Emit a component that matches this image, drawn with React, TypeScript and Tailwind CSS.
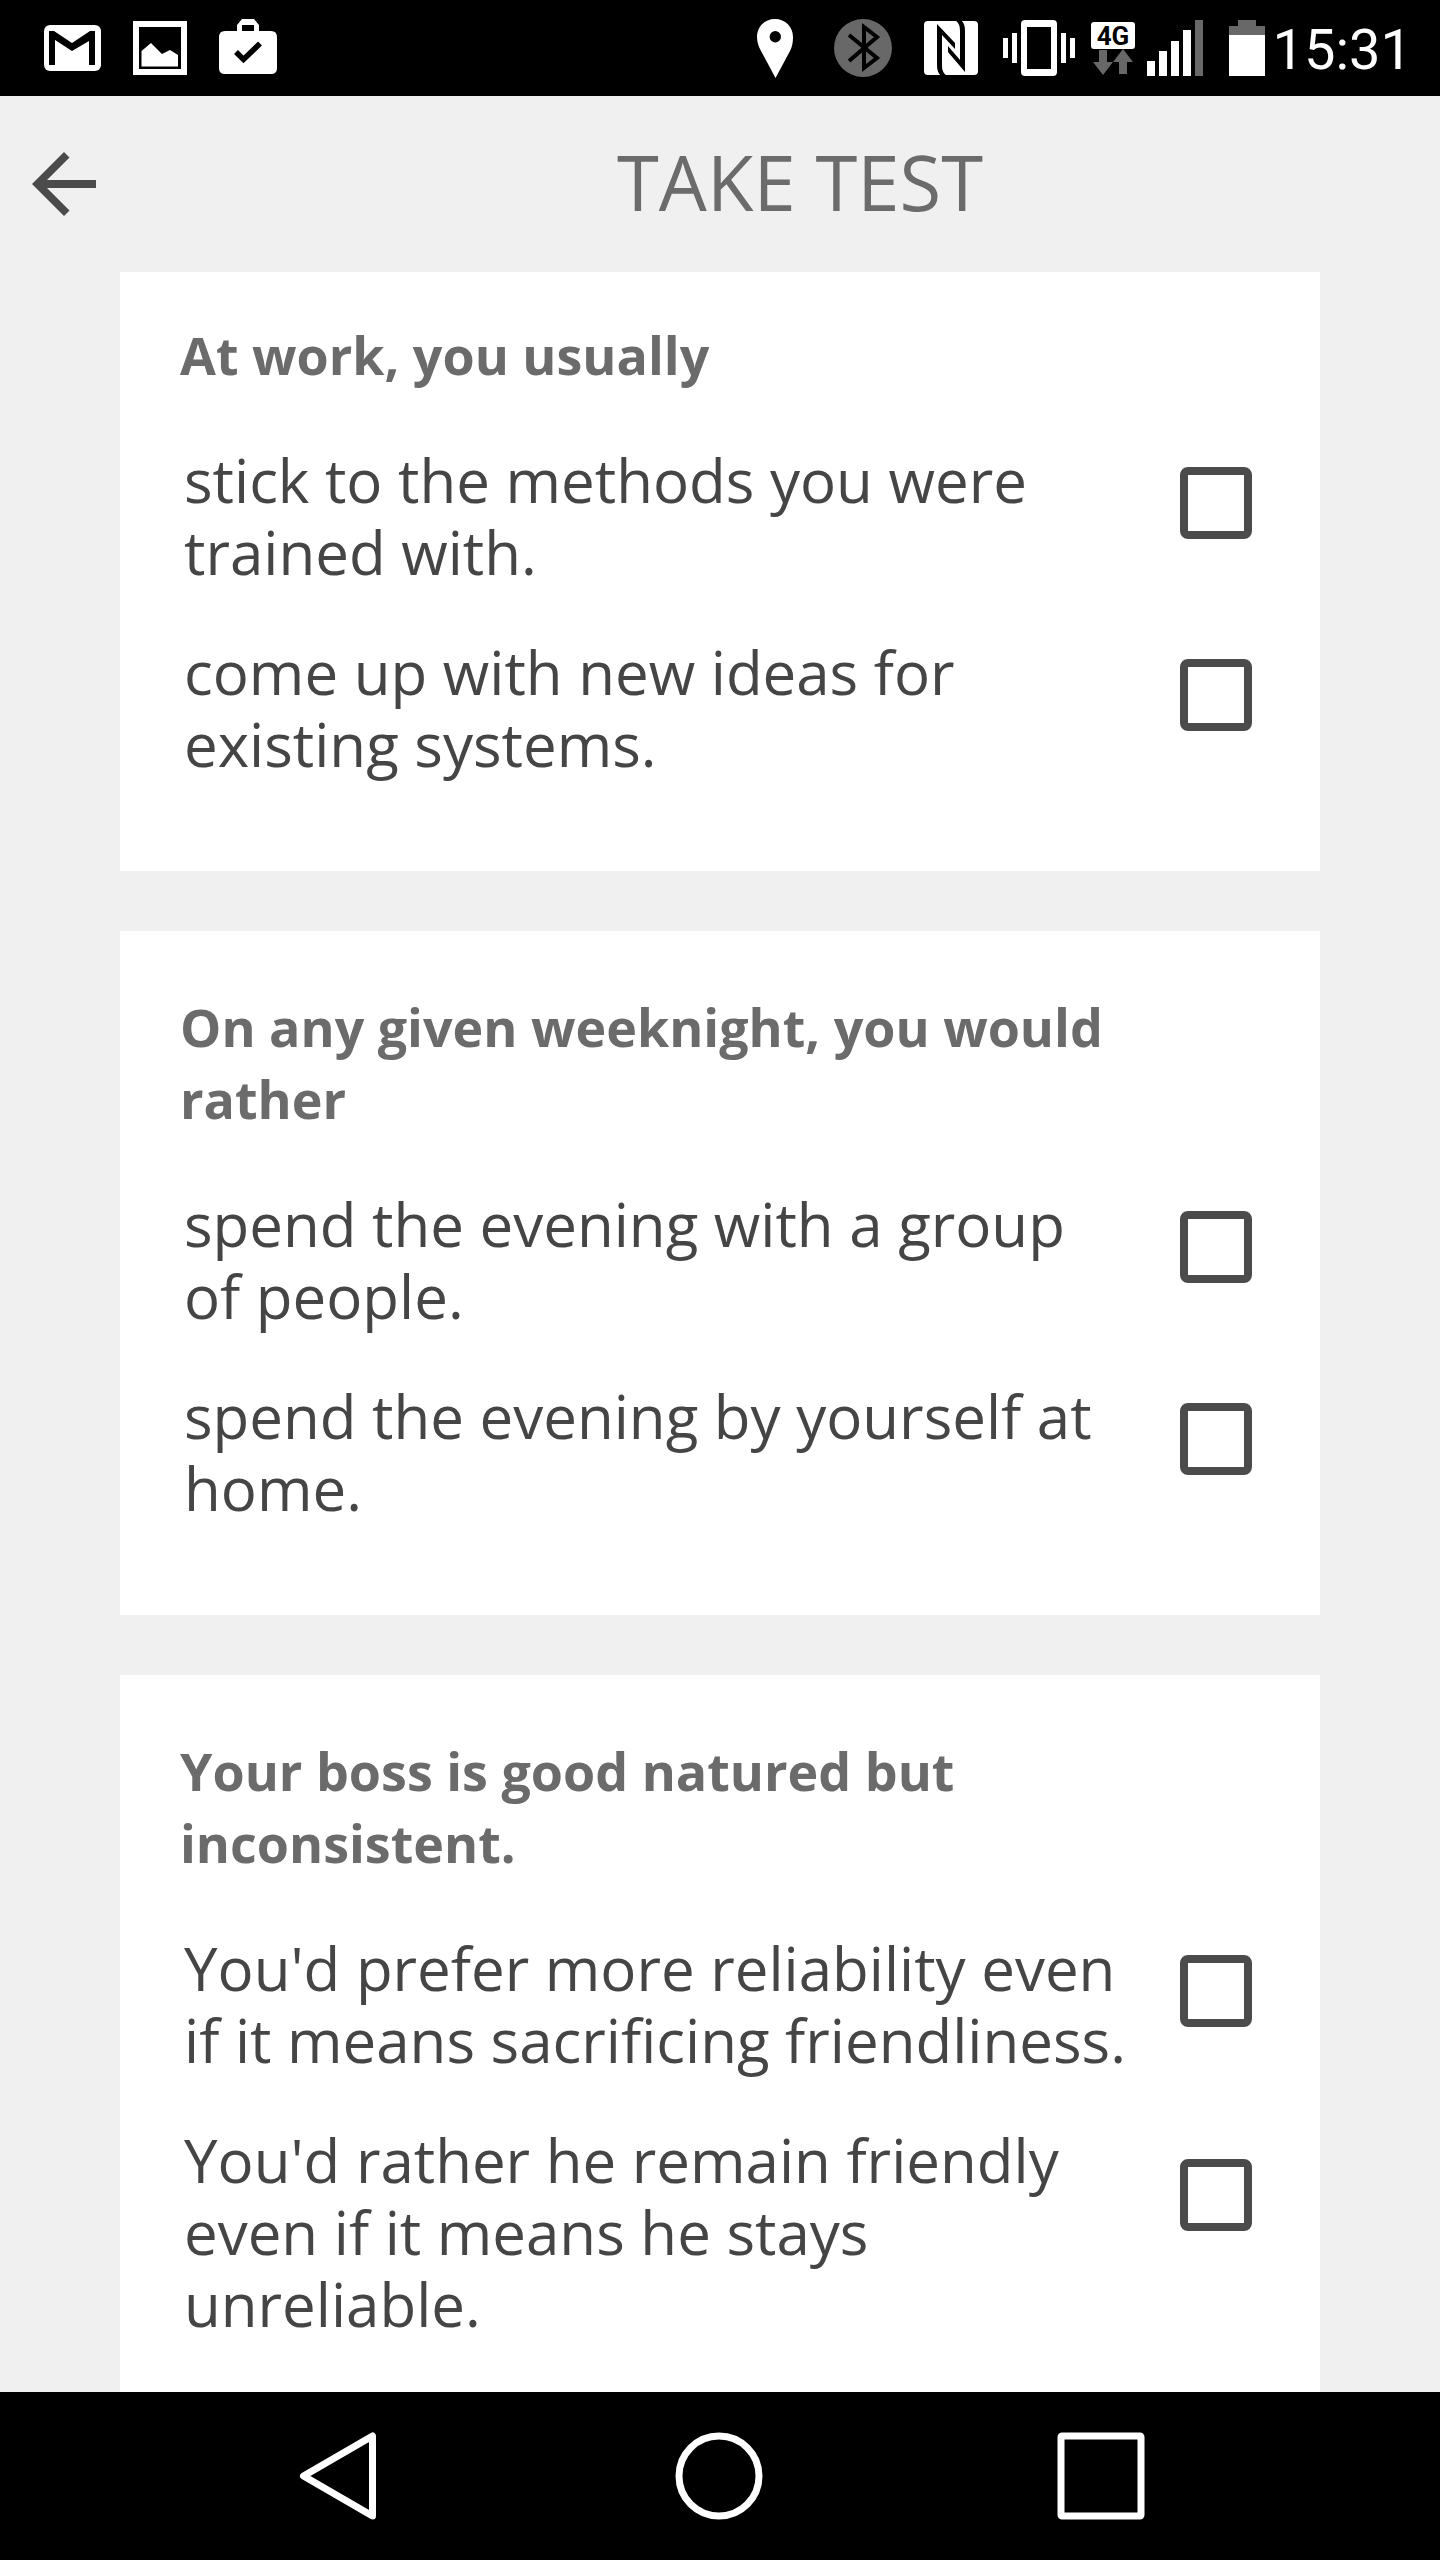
import { useState } from "react";

interface Question {
  id: string;
  title: string;
  options: string[];
}

const questions: Question[] = [
  {
    id: "work",
    title: "At work, you usually",
    options: [
      "stick to the methods you were trained with.",
      "come up with new ideas for existing systems.",
    ],
  },
  {
    id: "weeknight",
    title: "On any given weeknight, you would rather",
    options: [
      "spend the evening with a group of people.",
      "spend the evening by yourself at home.",
    ],
  },
  {
    id: "boss",
    title: "Your boss is good natured but inconsistent.",
    options: [
      "You'd prefer more reliability even if it means sacrificing friendliness.",
      "You'd rather he remain friendly even if it means he stays unreliable.",
    ],
  },
];

const StatusBar = () => (
  <div className="flex h-24 shrink-0 items-center justify-between bg-black pr-7 pl-11 font-['Roboto',sans-serif] text-white">
    <svg width="234" height="96" viewBox="44 0 234 96" fill="#fff" aria-hidden="true">
      <rect x="44" y="25" width="57" height="46" rx="6" />
      <path d="M49 31h5l18 12 18-12h5v34h-6V41L72 51 55 40v25h-6z" fill="#000" />
      <path d="M133 21h54v54h-54zM139 27v42h42V27z" fillRule="evenodd" />
      <path d="M141.500 51l9.500-8 11 11 8-4 8 5v11.500h-36.500z" />
      <path
        d="M225 31h12v-6l5-6h12l5 6v6h12q6 0 6 6v31q0 6-6 6h-46q-6 0-6-6V37q0-6 6-6zM242 25v6h12v-6z"
        fillRule="evenodd"
      />
      <path d="M236 52l7.500 7.500L260 43.500" fill="none" stroke="#000" strokeWidth="5.500" />
    </svg>
    <div className="flex items-center gap-2">
      <svg width="508" height="96" viewBox="757 0 508 96" fill="#fff" aria-hidden="true">
        <path
          d="M775 19c-10.500 0-18 8-18 18 0 6 2 10 4 14l14.500 27L790 51c2-4 3-8 3-14 0-10-7.500-18-18-18zm.3 12a5.700 5.700 0 1 1 0 11.400 5.700 5.700 0 0 1 0-11.400z"
          fillRule="evenodd"
        />
        <circle cx="863" cy="48" r="29" fill="#686868" />
        <path d="M849 35l28 23-13 10V27l13 10-28 24" fill="none" stroke="#000" strokeWidth="4" />
        <rect x="924" y="21" width="54" height="54" rx="4" />
        {/* left and right strokes of the NFC mark */}
        <path d="M937 24l18 19v6l-13-14v30c0 5 1 8 5 11h-6c-3-3-4-6-4-11z" fill="#000" />
        <path d="M965 72l-17-20v-6l12 14V31c0-5-1-8-5-11h6c3 3 4 6 4 11z" fill="#000" />
        <path
          d="M1025 20h28q4 0 4 4v48q0 4-4 4h-28q-4 0-4-4V24q0-4 4-4zM1027 27v42h24V27z"
          fillRule="evenodd"
        />
        <path d="M1003 38h5v20h-5zM1012 33h5v30h-5zM1061 33h5v30h-5zM1070 38h5v20h-5z" />
        <rect x="1091" y="22" width="44" height="27" rx="3" />
        <text x="1113" y="45" textAnchor="middle" fill="#000" className="text-[26px] font-bold">
          4G
        </text>
        <path d="M1099 50h8v12h6l-10 13-10-13h6zM1119 74h8V62h6l-10-13-10 13h6z" fill="#686868" />
        <path d="M1147 61h8v15h-8zM1159 51h8v25h-8zM1171 41h8v35h-8zM1183 30h8v46h-8z" />
        <path d="M1195 20h8v56h-8zM1229 35v-9h9v-6h18v6h9v9z" fill="#686868" />
        <path d="M1229 35h36v41h-36z" />
      </svg>
      <time className="pt-1 text-[56px] leading-[72px]">15:31</time>
    </div>
  </div>
);

const Header = () => (
  <header className="relative z-10 grid h-44 shrink-0 grid-cols-[160px_1fr] items-center bg-[#f0f0f0] pl-8">
    <button type="button" aria-label="Back" className="h-16 w-16">
      <svg width="64" height="64" viewBox="0 0 64 64" fill="#4b4b4b">
        <path d="M64 28H15l22.500-22.500L32 0 0 32l32 32 5.500-5.500L15 36h49z" />
      </svg>
    </button>
    <h1 className="pr-40 pb-1 pl-32 text-center text-[76px] leading-[104px] text-[#6b6b6b]">TAKE TEST</h1>
  </header>
);

const QuestionCard = ({ question }: { question: Question }) => {
  const [checked, setChecked] = useState<string | null>(null);

  return (
    <fieldset className="bg-white px-[60px] pt-[60px] pb-[91px]">
      <legend className="float-left w-full pr-16 pb-[53px] text-[52px] leading-[72px] font-bold text-[#6b6b6b]">
        {question.title}
      </legend>
      <div className="clear-both flex flex-col gap-12">
        {question.options.map((option) => (
          <label key={option} className="flex justify-between gap-12 pr-2 pl-1">
            <span className="flex-1 text-[60px] leading-[72px] text-[#454545]">{option}</span>
            <span className="grid grid-rows-[1fr_5fr]">
              <input
                type="checkbox"
                name={question.id}
                checked={checked === option}
                onChange={() => setChecked(checked === option ? null : option)}
                className="row-start-2 -mt-px h-[72px] w-[72px] appearance-none rounded-lg border-8 border-[#4b4b4b] checked:bg-[#4b4b4b]"
              />
            </span>
          </label>
        ))}
      </div>
    </fieldset>
  );
};

const NavBar = () => (
  <nav className="flex h-[168px] shrink-0 items-center justify-center gap-[292px] bg-black">
    <button type="button" aria-label="Back">
      <svg width="88" height="88" viewBox="0 0 88 88" fill="none" stroke="#fff" strokeWidth="7">
        <path d="M77.500 4v80L8.500 44z" strokeLinejoin="round" />
      </svg>
    </button>
    <button type="button" aria-label="Home">
      <svg width="88" height="88" viewBox="0 0 88 88" fill="none" stroke="#fff" strokeWidth="7">
        <circle cx="44" cy="44" r="40" />
      </svg>
    </button>
    <button type="button" aria-label="Recent apps">
      <svg width="90" height="88" viewBox="0 0 90 88" fill="none" stroke="#fff" strokeWidth="7">
        <rect x="6" y="4" width="80" height="80" rx="1" />
      </svg>
    </button>
  </nav>
);

export default function App() {
  return (
    <div className="flex h-screen flex-col bg-[#f0f0f0] font-['Open_Sans',sans-serif]">
      <StatusBar />
      <Header />
      {/* list sits slightly scrolled under the header */}
      <main className="-mt-[13px] flex min-h-0 flex-1 flex-col gap-[60px] overflow-hidden px-[120px] *:shrink-0">
        {questions.map((question) => (
          <QuestionCard key={question.id} question={question} />
        ))}
      </main>
      <NavBar />
    </div>
  );
}
